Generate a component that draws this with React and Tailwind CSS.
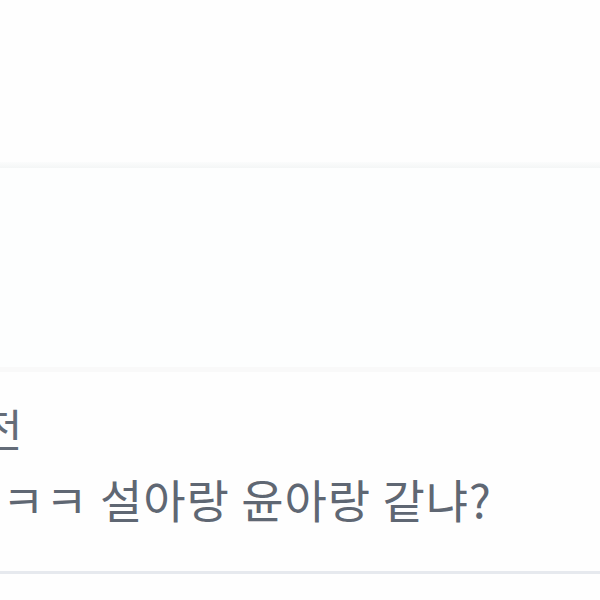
export default function App() {
  return (
    <div
      className="w-[600px] h-[600px] overflow-hidden bg-[#fefefe]"
      style={{ fontFamily: '"Noto Sans CJK KR", "Noto Sans", sans-serif' }}
    >
      {/* 위쪽 빈 카드 */}
      <div className="h-[162px] bg-[#fefefe]" />
      <div className="h-[6px] bg-gradient-to-b from-[#fbfcfc] to-[#f4f6f6]" />

      {/* 가운데 빈 카드 */}
      <div className="h-[199px] bg-[#fdfefe]" />
      <div className="h-[5px] bg-[#f9f9f9]" />

      {/* 댓글 */}
      <div className="h-[202px] bg-[#fefefe] overflow-hidden border-b-[3px] border-[#e6e9ee]">
        <div className="pt-[30px] text-[44px] leading-[52px] text-[#646c78] whitespace-nowrap -ml-[18px]">
          전
        </div>
        <div className="mt-[14px] text-[46px] leading-[60px] tracking-[1px] text-[#5f6773] whitespace-nowrap pl-[2px]">
          ㅋㅋ 설아랑 윤아랑 같냐?
        </div>
      </div>
    </div>
  );
}
